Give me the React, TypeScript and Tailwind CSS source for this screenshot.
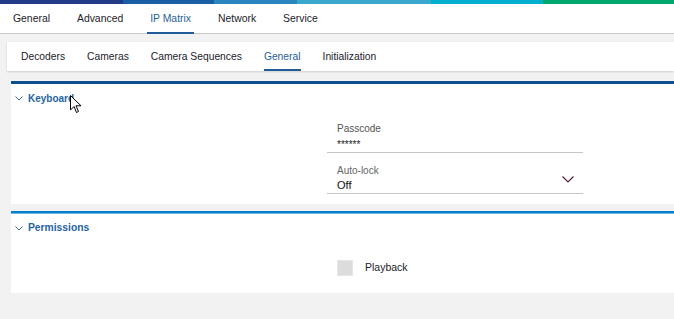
import React from "react";

const font = { fontFamily: '"Liberation Sans", Arial, sans-serif' };

function Chevron({ className = "" }: { className?: string }) {
  return (
    <svg width="8" height="5" viewBox="0 0 8 5" className={className}>
      <path d="M0.5 0.5 L4 4 L7.5 0.5" fill="none" stroke="#3b6fa3" strokeWidth="1" />
    </svg>
  );
}

export default function App() {
  const top = ["General", "Advanced", "IP Matrix", "Network", "Service"];
  const sub = ["Decoders", "Cameras", "Camera Sequences", "General", "Initialization"];
  return (
    <div className="relative w-[674px] h-[319px] bg-[#f2f2f2] overflow-hidden" style={font}>
      {/* color bar */}
      <div className="flex h-[4px]">
        <div className="w-[123px] bg-[#213b87]" />
        <div className="w-[91px] bg-[#1a5fa6]" />
        <div className="w-[83px] bg-[#2b85bf]" />
        <div className="w-[134px] bg-[#3aa8cc]" />
        <div className="w-[112px] bg-[#00aecf]" />
        <div className="flex-1 bg-[#00a86e]" />
      </div>
      {/* top nav */}
      <div className="flex h-[30px] bg-white border-b border-[#c9c9c9] pl-[10px] gap-[21px] text-[10.4px] text-[#1c1c2a]">
        {top.map((t) => (
          <div
            key={t}
            className={
              "relative flex items-center px-[3px] " +
              (t === "IP Matrix" ? "text-[#1f5f9e]" : "")
            }
          >
            {t}
            {t === "IP Matrix" && (
              <div className="absolute left-0 right-0 bottom-[-1px] h-[2px] bg-[#1f5c99]" />
            )}
          </div>
        ))}
      </div>
      {/* sub nav */}
      <div className="ml-[7px] mt-[8px] h-[29px] bg-white shadow-[0_1px_2px_rgba(0,0,0,0.15)] flex pl-[14px] gap-[22px] text-[10.3px] text-[#1c1c2a]">
        {sub.map((t) => (
          <div
            key={t}
            className={"relative flex items-center " + (t === "General" ? "text-[#1f5f9e]" : "")}
          >
            {t}
            {t === "General" && (
              <div className="absolute left-0 right-0 bottom-[0px] h-[2px] bg-[#1f5c99]" />
            )}
          </div>
        ))}
      </div>
      {/* Keyboard panel */}
      <div className="ml-[11px] mt-[10px] h-[123px] bg-white border-t-[3px] border-[#0d4f8f]">
        <div className="flex items-center h-[28px] pl-[4px] gap-[5px] text-[10px] font-bold text-[#1f64a6]">
          <Chevron />
          <span>Keyboard</span>
        </div>
        <div className="ml-[316px] w-[256px] mt-[9px]">
          <div className="border-b border-[#c6c6c6] pl-[10px] h-[32px] pt-[2px]">
            <div className="text-[10px] text-[#555] leading-[12px]">Passcode</div>
            <div className="text-[10px] text-[#222] leading-[12px] mt-[4px]">******</div>
          </div>
          <div className="relative border-b border-[#c6c6c6] pl-[10px] h-[41px] pt-[12px]">
            <div className="text-[10px] text-[#666] leading-[12px]">Auto-lock</div>
            <div className="text-[11px] text-[#111] leading-[13px] mt-[2px]">Off</div>
            <svg
              width="12"
              height="7"
              viewBox="0 0 12 7"
              className="absolute right-[9px] top-[23px]"
            >
              <path d="M0.5 0.5 L6 6 L11.5 0.5" fill="none" stroke="#5a1f3a" strokeWidth="1.2" />
            </svg>
          </div>
        </div>
      </div>
      {/* Permissions panel */}
      <div className="ml-[11px] mt-[7px] h-[82px] bg-white">
        <div className="h-[2px] bg-[#0b7dc9]" />
        <div className="h-[1px] bg-[#6cb7e5]" />
        <div className="flex items-center h-[28px] pl-[4px] gap-[5px] text-[10.3px] font-bold text-[#1f64a6]">
          <Chevron />
          <span>Permissions</span>
        </div>
        <div className="flex items-center ml-[326px] mt-[18px] gap-[12px]">
          <div className="w-[16px] h-[16px] bg-[#dcdcdc] border border-[#e6e6e6]" />
          <span className="text-[10.5px] text-[#1c1c2a]">Playback</span>
        </div>
      </div>
      {/* mouse cursor */}
      <svg
        width="12"
        height="19"
        viewBox="0 0 12 19"
        className="absolute left-[70px] top-[95px]"
      >
        <path
          d="M0.5 0.5 L0.5 15 L4 11.5 L6.5 17.5 L8.5 16.5 L6 10.8 L11 10.8 Z"
          fill="white"
          stroke="black"
          strokeWidth="1"
        />
      </svg>
    </div>
  );
}
